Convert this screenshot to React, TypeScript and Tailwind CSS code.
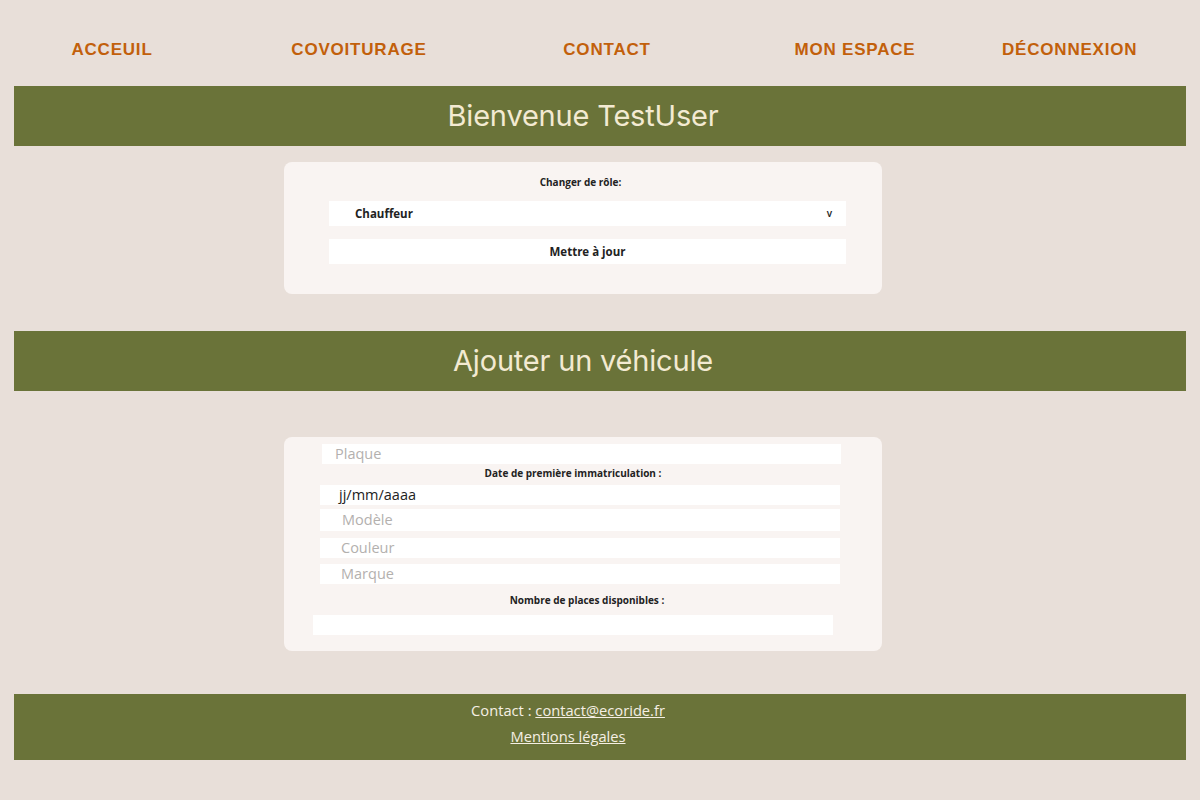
const navItems = [
  { label: "ACCEUIL", w: "w-[200px]" },
  { label: "COVOITURAGE", w: "w-[294px]" },
  { label: "CONTACT", w: "w-[202px]" },
  { label: "MON ESPACE", w: "w-[294px]" },
  { label: "DÉCONNEXION", w: "w-[122px]" },
];

const Banner = ({ title }: { title: string }) => (
  <div className="mx-[14px] flex h-[60px] items-center justify-center bg-[#6a7339] pr-[34px]">
    <h1 className="font-['Inter',sans-serif] text-[29px] font-normal tracking-[-0.2px] text-[#f3ead2]">
      {title}
    </h1>
  </div>
);

const Label = ({ children, className = "" }: { children: string; className?: string }) => (
  <p
    className={`text-center font-['Open_Sans',sans-serif] text-[10px] font-bold text-[#222] ${className}`}
  >
    {children}
  </p>
);

const Field = ({
  text,
  muted = true,
  className,
}: {
  text?: string;
  muted?: boolean;
  className: string;
}) => (
  <div
    className={`flex items-center bg-white font-['Open_Sans',sans-serif] text-[14.5px] ${
      muted ? "text-[#b3b0ae]" : "text-[#222]"
    } ${className}`}
  >
    {text}
  </div>
);

export default function App() {
  return (
    <div className="min-h-[800px] bg-[#e8dfd9] pt-[39px] pb-[40px]">
      <nav className="flex pl-[12px] font-['Liberation_Sans',sans-serif] text-[17px] font-bold tracking-[0.8px] text-[#c2600b]">
        {navItems.map((item) => (
          <a key={item.label} className={`${item.w} text-center leading-[22px]`}>
            {item.label}
          </a>
        ))}
      </nav>

      <div className="mt-[25px]">
        <Banner title="Bienvenue TestUser" />
      </div>

      <section className="ml-[284px] mt-[16px] h-[132px] w-[598px] rounded-lg bg-[#f9f4f2] pt-[13px]">
        <Label className="pr-[5px]">Changer de rôle:</Label>
        <div className="ml-[45px] mt-[11px] flex h-[25px] w-[517px] items-center justify-between bg-white pl-[26px] pr-[14px] font-['Open_Sans',sans-serif] text-[11.5px] font-bold text-[#222]">
          <span>Chauffeur</span>
          <span className="text-[10px] font-semibold">v</span>
        </div>
        <button className="ml-[45px] mt-[13px] flex h-[25px] w-[517px] items-center justify-center bg-white font-['Open_Sans',sans-serif] text-[11.5px] font-bold text-[#222]">
          Mettre à jour
        </button>
      </section>

      <div className="mt-[37px]">
        <Banner title="Ajouter un véhicule" />
      </div>

      <section className="ml-[284px] mt-[46px] h-[214px] w-[598px] rounded-lg bg-[#f9f4f2] pt-[7px]">
        <Field text="Plaque" className="ml-[38px] h-[20px] w-[519px] pl-[13px]" />
        <div className="mt-[2px] leading-[14px]">
          <Label className="pr-[20px]">Date de première immatriculation :</Label>
        </div>
        <Field
          text="jj/mm/aaaa"
          muted={false}
          className="mt-[5px] ml-[36px] h-[20px] w-[520px] pl-[19px]"
        />
        <Field text="Modèle" className="mt-[4px] ml-[36px] h-[22px] w-[520px] pl-[22px]" />
        <Field text="Couleur" className="mt-[7px] ml-[36px] h-[20px] w-[520px] pl-[21px]" />
        <Field text="Marque" className="mt-[6px] ml-[36px] h-[20px] w-[520px] pl-[21px]" />
        <div className="mt-[9px] leading-[14px]">
          <Label className="pl-[8px]">Nombre de places disponibles :</Label>
        </div>
        <div className="mt-[8px] ml-[29px] h-[20px] w-[520px] bg-white" />
      </section>

      <footer className="mx-[14px] mt-[43px] flex h-[66px] flex-col items-center bg-[#6a7339] pt-[5px] pr-[64px] font-['Open_Sans',sans-serif] text-[14.7px] text-[#f5efe4]">
        <p className="leading-[22px]">
          Contact : <a className="underline">contact@ecoride.fr</a>
        </p>
        <a className="mt-[4px] leading-[22px] underline">Mentions légales</a>
      </footer>
    </div>
  );
}
